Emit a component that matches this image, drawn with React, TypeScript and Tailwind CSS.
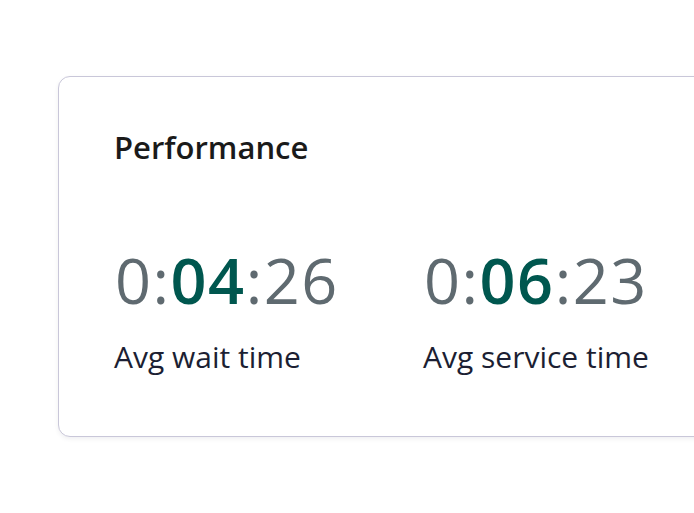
export default function App() {
  return (
    <div className="min-h-[513px] w-[694px] overflow-hidden bg-white pl-[58px] pt-[76px]" style={{ fontFamily: '"Open Sans", "Noto Sans", sans-serif' }}>
      <div className="h-[361px] w-[700px] rounded-[12px] border border-[#c9c7d9] bg-white pl-[56px] pt-[50px] shadow-[0_2px_4px_rgba(60,60,90,0.08)]">
        <h2 className="-ml-[1px] text-[31px] font-semibold leading-[40px] text-[#1a1a1a]">Performance</h2>
        <div className="mt-[78px] flex">
          <div className="w-[309px]">
            <div className="text-[63px] leading-[70px] tracking-[1.5px] text-[#5f6a70]">
              0:<span className="font-semibold text-[#00574f]">04</span>:26
            </div>
            <div className="-ml-[1px] mt-[24px] text-[30px] leading-[36px] text-[#1c1f33]">Avg wait time</div>
          </div>
          <div>
            <div className="text-[63px] leading-[70px] tracking-[1.5px] text-[#5f6a70]">
              0:<span className="font-semibold text-[#00574f]">06</span>:23
            </div>
            <div className="-ml-[1px] mt-[24px] text-[30px] leading-[36px] text-[#1c1f33]">Avg service time</div>
          </div>
        </div>
      </div>
    </div>
  );
}
